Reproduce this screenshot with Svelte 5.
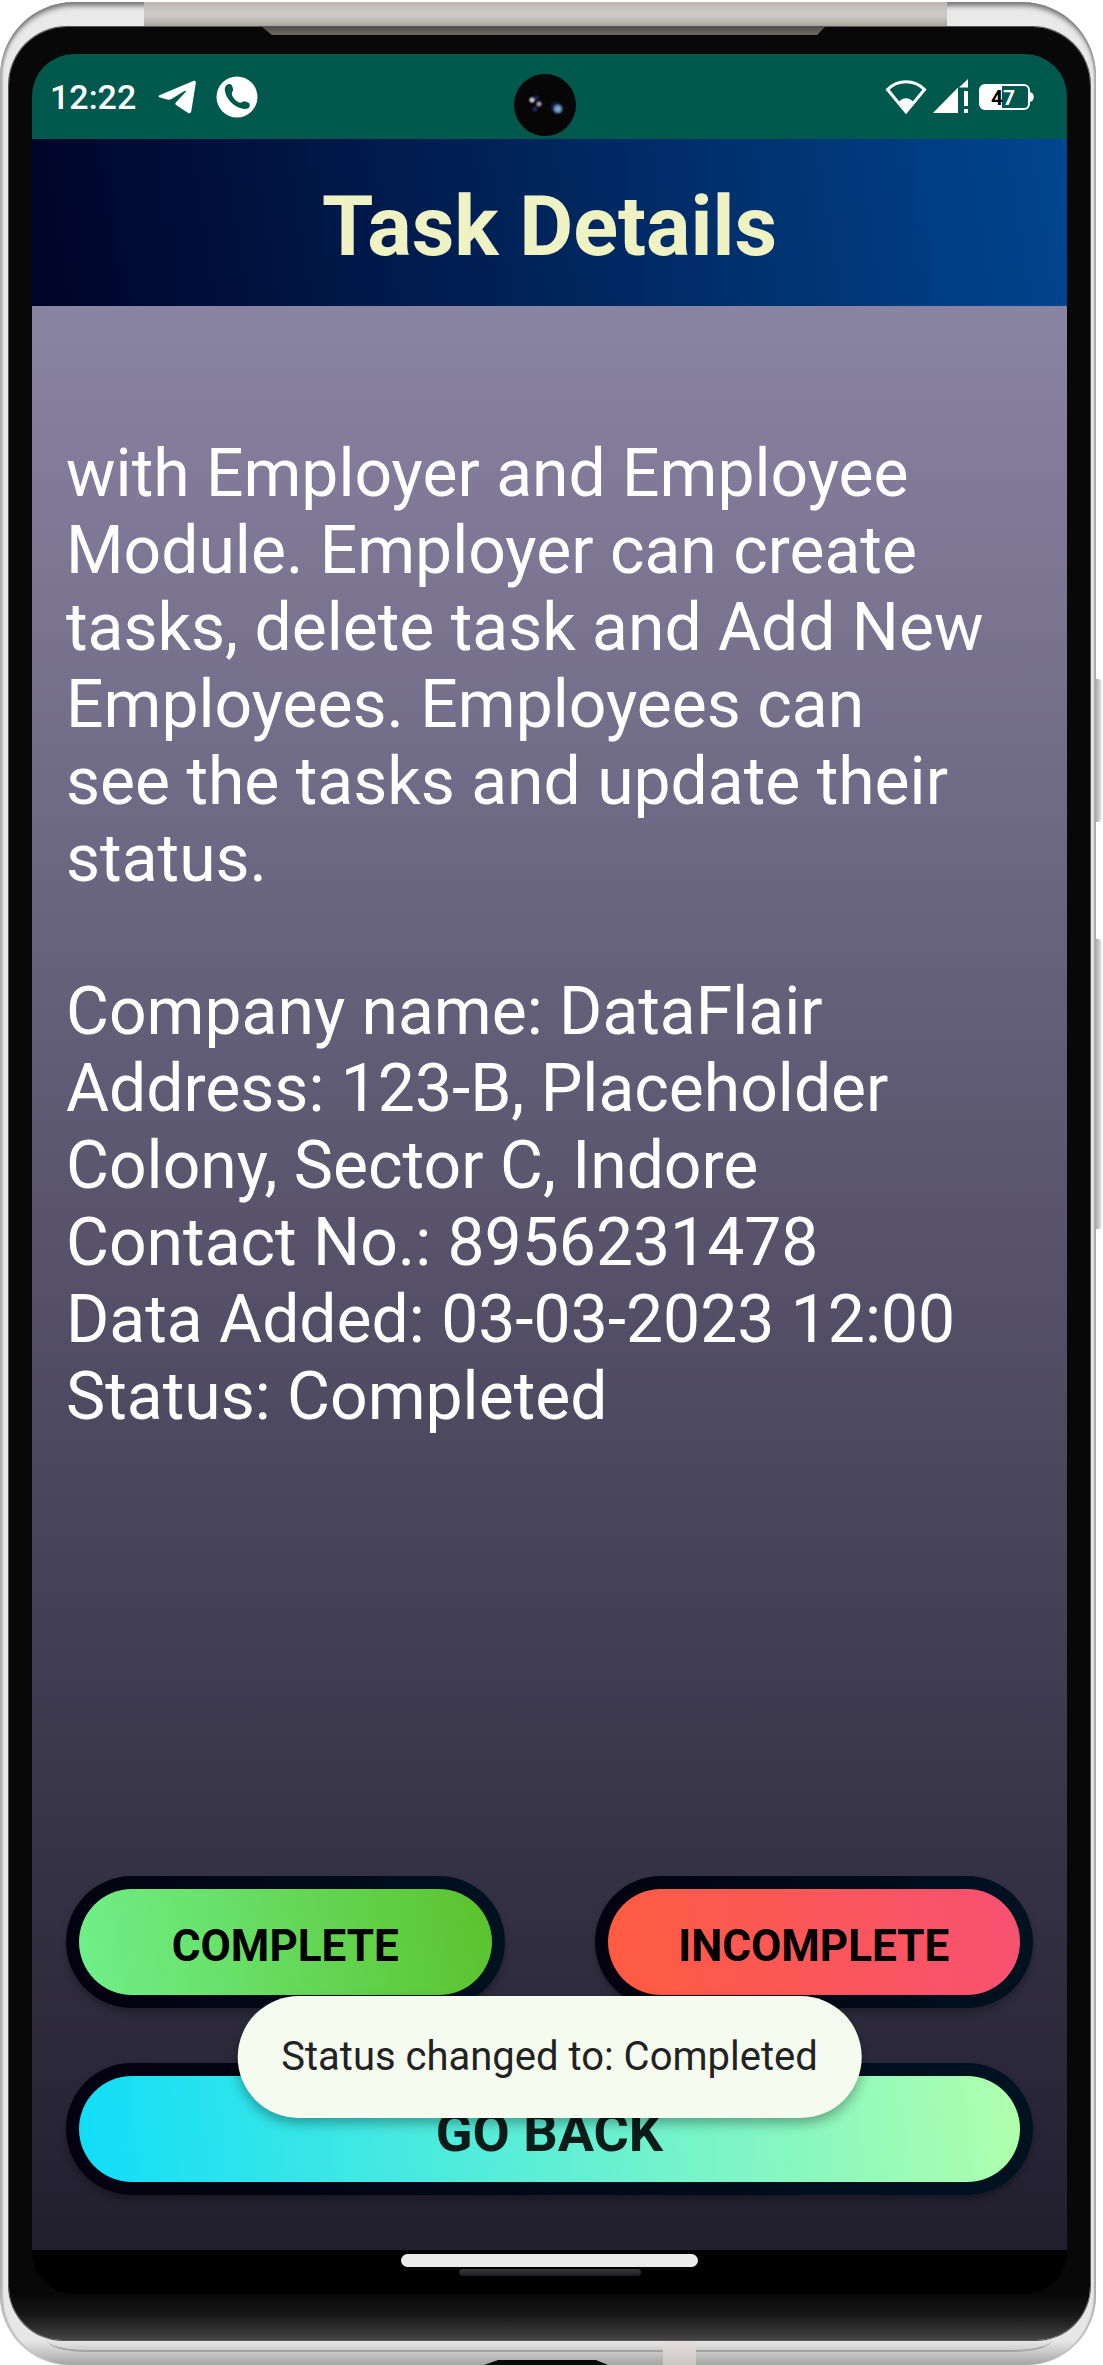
<script>
  const details = [
    'with Employer and Employee',
    'Module. Employer can create',
    'tasks, delete task and Add New',
    'Employees. Employees can',
    'see the tasks and update their',
    'status.'
  ];
  const address = [
    'Company name: DataFlair',
    'Address: 123-B, Placeholder',
    'Colony, Sector C, Indore',
    'Contact No.: 8956231478',
    'Data Added: 03-03-2023 12:00'
  ];
  let status = $state('Completed');
</script>

<div class="device">
  <span class="side-key power"></span>
  <span class="side-key volume"></span>
  <div class="case">
    <span class="top-band"></span>
    <span class="seam"></span>
    <span class="antenna"></span>
    <span class="port"></span>
    <div class="bezel">
      <span class="speaker"></span>
      <div class="screen">
        <div class="statusbar">
          <time class="clock">12:22</time>
          <svg class="telegram" width="38" height="34" viewBox="0 0 38 34" aria-hidden="true">
            <path d="M1.4 15.2 35.2.9c1.700-.7 2.900.2 2.600 2L33.300 31c-.4 2.300-1.800 2.700-3.500 1.700L18.800 25.600c-1.800-1.200-1.900-2.300-.3-3.900L27.600 12c.8-.9-.1-1.600-1.200-.9L13.500 19c-1.300.8-2.900.9-4.400.5l-7-1.900c-1.700-.5-1.900-1.700-.7-2.400Z" fill="#fff" />
          </svg>
          <svg class="call" width="42" height="42" viewBox="0 0 42 42" aria-hidden="true">
            <circle cx="21" cy="21" r="20.500" fill="#fff" />
            <path d="M11.500 8.500c2-1 4.200-.2 4.700 1.500l1 3.600c.3 1.500-1.700 2.700-1.400 4.300.5 3.500 4.500 7.600 8.300 8.800 1.500.4 2.800-1.700 4.300-1.500l3.700 1.300c1.800.6 2.300 2.900 1.100 4.700-1.300 2-4.700 2.100-8.500 1C16.500 29.600 10.200 22.500 8.900 15c-.5-3 .5-5.500 2.600-6.500Z" fill="#00594c" />
          </svg>
          <span class="spacer"></span>
          <svg class="wifi" width="42" height="36" viewBox="0 0 42 36" aria-hidden="true">
            <path d="M2.500 10.500C13 .2 29 .2 39.500 10.500L21 33Z" fill="none" stroke="#fff" stroke-width="3" />
            <path d="M14 22.500c4-4.500 10-4.500 14 0L21 34Z" fill="#fff" />
          </svg>
          <svg class="signal" width="35" height="35" viewBox="0 0 35 35" aria-hidden="true">
            <path d="M0 34 25 8.500V34ZM26 8.500 35 0v8.500ZM31 12h4v15h-4ZM31 30h4v4h-4Z" fill="#fff" />
          </svg>
          <svg class="battery" width="55" height="26" viewBox="0 0 55 26" aria-hidden="true">
            <rect x="1" y="1" width="49" height="24" rx="5" fill="none" stroke="#fff" stroke-width="2" />
            <path d="M6 1h17v24H6a5 5 0 0 1-5-5V6a5 5 0 0 1 5-5Z" fill="#fff" />
            <path d="M51 8c5 1 5 9 0 10Z" fill="#fff" />
            <text x="18" y="21" class="charge" fill="#000">4</text>
            <text x="30" y="21" class="charge" fill="#fff">7</text>
          </svg>
          <svg class="camera" width="62" height="62" viewBox="0 0 62 62" aria-hidden="true">
            <defs>
              <radialGradient id="lens"><stop offset="0.3" stop-color="#6fa8cc" /><stop offset="1" stop-color="#6fa8cc" stop-opacity="0" /></radialGradient>
              <radialGradient id="blue"><stop offset="0.1" stop-color="#1d2b66" /><stop offset="1" stop-color="#1d2b66" stop-opacity="0" /></radialGradient>
              <radialGradient id="glint"><stop offset="0.2" stop-color="#c5d2cf" /><stop offset="1" stop-color="#c5d2cf" stop-opacity="0" /></radialGradient>
              <radialGradient id="mauve"><stop offset="0.2" stop-color="#a595b5" /><stop offset="1" stop-color="#a595b5" stop-opacity="0" /></radialGradient>
            </defs>
            <circle cx="31" cy="31" r="31" fill="#060606" />
            <circle cx="42" cy="33" r="7" fill="url(#blue)" />
            <circle cx="44" cy="35" r="6" fill="url(#lens)" />
            <circle cx="22" cy="24" r="4" fill="url(#blue)" />
            <circle cx="21" cy="35" r="4" fill="url(#blue)" />
            <circle cx="18" cy="26" r="4" fill="url(#glint)" />
            <circle cx="25" cy="30" r="4" fill="url(#mauve)" />
          </svg>
        </div>

        <header class="appbar"><h1>Task Details</h1></header>

        <main class="content">
          <div class="details">
            <p>{#each details as line}<span class="line">{line}</span>{/each}</p>
            <p>
              {#each address as line}<span class="line">{line}</span>{/each}
              <span class="line">Status: {status}</span>
            </p>
          </div>
          <div class="actions">
            <button type="button" class="btn complete" onclick={() => (status = 'Completed')}>COMPLETE</button>
            <button type="button" class="btn incomplete" onclick={() => (status = 'Incomplete')}>INCOMPLETE</button>
            <button type="button" class="btn back">GO BACK</button>
            <div class="toast" role="status">Status changed to: {status}</div>
          </div>
        </main>

        <div class="navbar">
          <span class="home"></span>
          <span class="mic"></span>
        </div>
      </div>
    </div>
  </div>
</div>

<style>
  :global(body) {
    background: #fff;
  }
  .device {
    box-sizing: border-box;
    position: relative;
    display: flex;
    min-height: 100vh;
    padding: 2px 7px 0 0;
    font-family: Roboto, sans-serif;
  }
  .side-key {
    position: absolute;
    right: 1px;
    width: 7px;
    border-radius: 0 4px 4px 0;
    background: linear-gradient(90deg, #a6a6a6, #c4c4c4 50%, #f4f4f4);
  }
  .power {
    top: 679px;
    height: 143px;
  }
  .volume {
    top: 939px;
    height: 290px;
  }
  .case {
    box-sizing: border-box;
    position: relative;
    display: flex;
    flex: 1;
    padding: 25px 6px 25px 9px;
    border-radius: 74px 74px 70px 70px;
    overflow: hidden;
    background: linear-gradient(#e9e9e9 0 96%, #e6e6e6 99%, #a4a4a4);
    box-shadow:
      inset 0 5px 5px -1px #777,
      inset 3px 0 1px #c6c6c6,
      inset -2px 0 1px #bdbdbd;
  }
  .top-band {
    position: absolute;
    top: 0;
    left: 144px;
    right: 149px;
    height: 26px;
    background: linear-gradient(#bdb6b2, #cfcdcb 50%, #a8a39c 95%, #77736c);
  }
  .seam {
    position: absolute;
    bottom: 13px;
    left: 47px;
    right: 44px;
    height: 20px;
    border-bottom: 2px solid #a3a3a3;
    border-radius: 0 0 40px 40px / 0 0 12px 12px;
  }
  .antenna {
    position: absolute;
    bottom: 0;
    right: 400px;
    width: 33px;
    height: 25px;
    background: linear-gradient(#e6e1e1, #cbc5c3);
  }
  .port {
    position: absolute;
    bottom: 0;
    left: 484px;
    right: 488px;
    height: 5px;
    background: #0a0a0a;
    clip-path: polygon(14px 0, calc(100% - 12px) 0, 100% 100%, 0 100%);
  }
  .bezel {
    position: relative;
    display: flex;
    flex: 1;
    padding: 27px 23px 46px;
    border-radius: 58px 58px 54px 54px;
    background: linear-gradient(#080808 0 97%, #080808 calc(100% - 46px), #181818 calc(100% - 24px), #444);
    box-shadow: 0 0 0 1px #555;
  }
  .speaker {
    position: absolute;
    top: 0;
    left: 253px;
    right: 265px;
    height: 8px;
    background: linear-gradient(#514d47, #6d6a65);
    clip-path: polygon(0 0, 100% 0, calc(100% - 8px) 100%, 10px 100%);
  }
  .screen {
    display: flex;
    flex: 1;
    flex-direction: column;
    border-radius: 42px;
    overflow: hidden;
    background: #000;
  }
  .statusbar {
    box-sizing: border-box;
    position: relative;
    display: flex;
    align-items: center;
    height: 85px;
    padding: 0 33px 0 18px;
    background: #00594c;
    color: #fff;
  }
  .clock {
    font-size: 34px;
    font-weight: 500;
    line-height: 44px;
  }
  .telegram {
    margin-left: 22px;
  }
  .call {
    margin-left: 20px;
  }
  .spacer {
    flex: 1;
  }
  .signal {
    margin: 0 11px 0 6px;
  }
  .charge {
    font-size: 21px;
    font-weight: 700;
    text-anchor: middle;
  }
  .camera {
    position: absolute;
    top: 20px;
    left: calc(50% - 36px);
  }
  .appbar {
    display: flex;
    align-items: center;
    justify-content: center;
    height: 167px;
    background: linear-gradient(81deg, #000328, #004690);
  }
  h1 {
    margin: 0;
    padding-top: 8px;
    color: #eff3c3;
    font-size: 83px;
    font-weight: 700;
    line-height: 98px;
  }
  .content {
    display: flex;
    flex: 1;
    flex-direction: column;
    justify-content: space-between;
    padding: 129px 34px 55px;
    background: linear-gradient(#8a84a3, #211e2e);
  }
  .details {
    display: grid;
    gap: 76px;
    color: #fff;
    font-size: 66px;
    line-height: 77px;
  }
  p {
    margin: 0;
  }
  .line {
    display: block;
    white-space: nowrap;
  }
  .actions {
    position: relative;
    display: grid;
    grid-template-columns: 1fr 1fr;
    gap: 55px 90px;
  }
  .btn {
    height: 132px;
    padding: 8px 0 0;
    border: 13px solid transparent;
    border-radius: 66px;
    color: #000;
    font: 700 44px/52px Roboto, sans-serif;
    box-shadow: 0 5px 7px rgb(0 0 0 / 28%);
  }
  .complete {
    background:
      linear-gradient(81deg, #70f08a, #5bc22c) padding-box,
      linear-gradient(81deg, #04000f, #001220) border-box;
  }
  .incomplete {
    background:
      linear-gradient(81deg, #ff5c40, #f75172) padding-box,
      linear-gradient(81deg, #04000f, #001220) border-box;
  }
  .back {
    grid-column: 1 / -1;
    font-size: 54px;
    background:
      linear-gradient(84deg, #11ddf8, #5fefd5 50%, #b0ffac) padding-box,
      linear-gradient(84deg, #04000f, #001220) border-box;
    color: #0c1c18;
  }
  .toast {
    box-sizing: border-box;
    position: absolute;
    bottom: 77px;
    left: 50%;
    transform: translateX(-50%);
    padding: 37px 44px;
    border-radius: 61px;
    background: #f5fbef;
    color: #222;
    font-size: 40px;
    line-height: 48px;
    white-space: nowrap;
    box-shadow: 0 6px 12px rgb(0 0 0 / 30%);
  }
  .navbar {
    box-sizing: border-box;
    display: flex;
    flex-direction: column;
    align-items: center;
    gap: 2px;
    height: 44px;
    padding-top: 4px;
  }
  .home {
    width: 297px;
    height: 13px;
    border-radius: 7px;
    background: #ebebeb;
  }
  .mic {
    width: 182px;
    height: 7px;
    border-radius: 4px;
    background: linear-gradient(#3a3a3c, #1c1c1e);
  }
</style>
